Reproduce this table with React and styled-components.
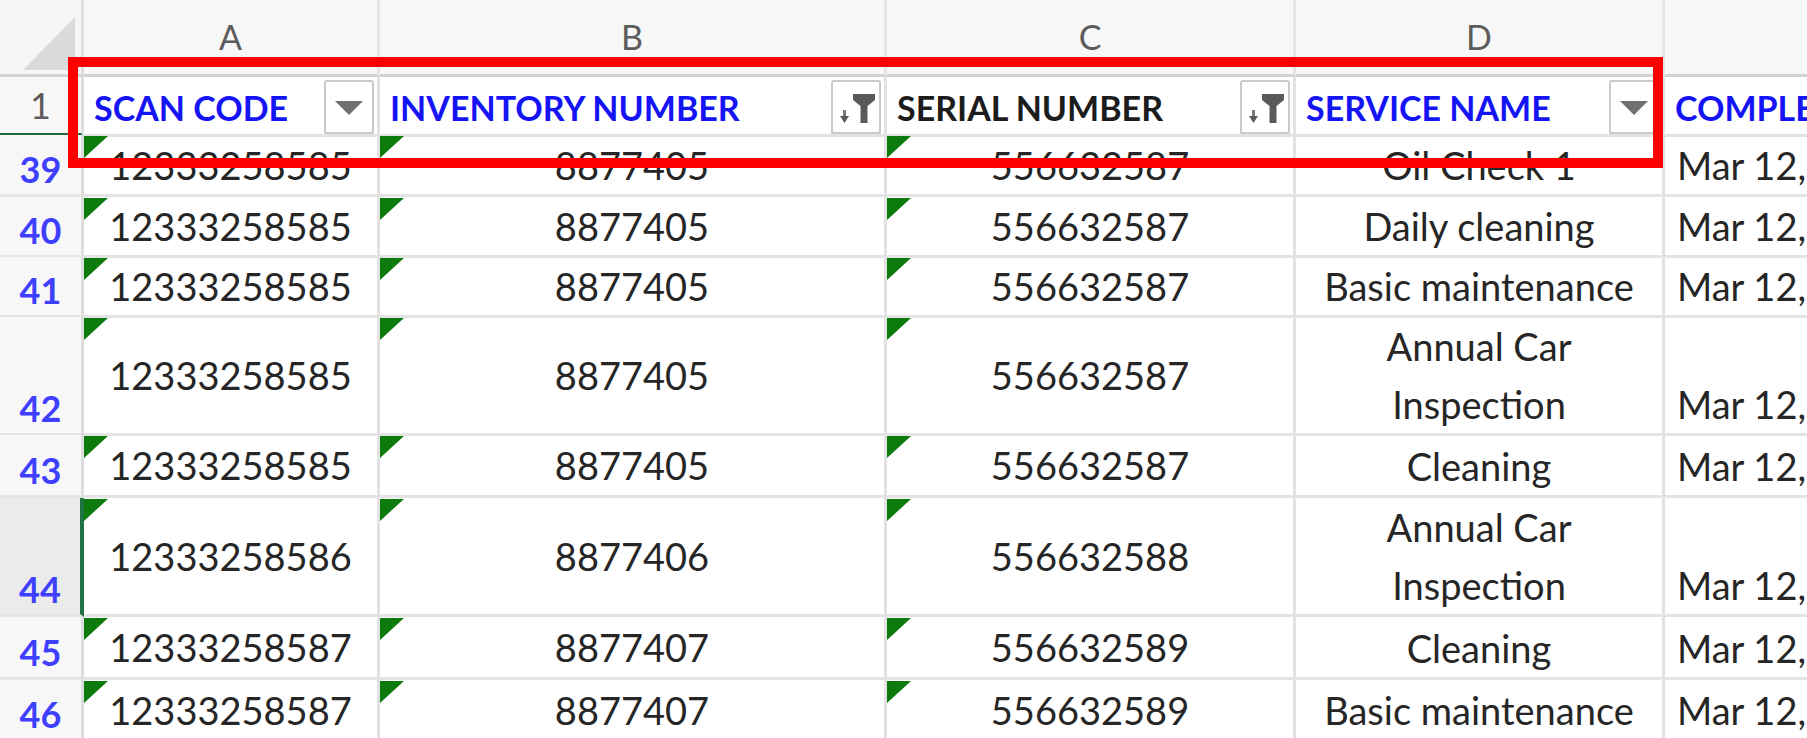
import styled, { createGlobalStyle } from 'styled-components';

const GlobalStyle = createGlobalStyle`
  body {
    margin: 0;
    background: #ffffff;
    font-family: Lato, "Open Sans", sans-serif;
  }
`;

const COLS = '84px 296px 507px 409px 369px 520px';

const rows = [
  { num: 39, h: 62, a: '12333258585', b: '8877405', c: '556632587', d: 'Oil Check 1' },
  { num: 40, h: 60, a: '12333258585', b: '8877405', c: '556632587', d: 'Daily cleaning' },
  { num: 41, h: 60, a: '12333258585', b: '8877405', c: '556632587', d: 'Basic maintenance' },
  { num: 42, h: 118, a: '12333258585', b: '8877405', c: '556632587', d: ['Annual Car', 'Inspection'] },
  { num: 43, h: 63, a: '12333258585', b: '8877405', c: '556632587', d: 'Cleaning' },
  { num: 44, h: 119, a: '12333258586', b: '8877406', c: '556632588', d: ['Annual Car', 'Inspection'], selected: true },
  { num: 45, h: 63, a: '12333258587', b: '8877407', c: '556632589', d: 'Cleaning' },
  { num: 46, h: 62, a: '12333258587', b: '8877407', c: '556632589', d: 'Basic maintenance' },
];

const headers = [
  { label: 'SCAN CODE', blue: true, filter: 'plain' },
  { label: 'INVENTORY NUMBER', blue: true, filter: 'sorted' },
  { label: 'SERIAL NUMBER', blue: false, filter: 'sorted' },
  { label: 'SERVICE NAME', blue: true, filter: 'plain' },
  { label: 'COMPLETION DATE', blue: true, filter: null },
];

function FilterIcon({ kind }) {
  if (kind === 'sorted') {
    return (
      <svg width="44" height="50" viewBox="0 0 44 50">
        <rect x="9" y="28" width="3" height="8" fill="#7a7a7a" />
        <polygon points="6,34 15,34 10.5,41" fill="#5a5a5a" />
        <polygon points="19,12 41,12 41,18 33.5,24 33.5,41 26.5,41 26.5,24 19,18" fill="#5a5a5a" />
      </svg>
    );
  }
  return (
    <svg width="44" height="50" viewBox="0 0 44 50">
      <polygon points="8,19 36,19 22,33" fill="#707070" />
    </svg>
  );
}

export default function App() {
  return (
    <>
      <GlobalStyle />
      <Viewport>
        <SheetRow $h={77}>
          <Corner />
          {['A', 'B', 'C', 'D', ''].map((l, i) => (
            <ColLetter key={i}>{l}</ColLetter>
          ))}
        </SheetRow>

        <SheetRow $h={58}>
          <RowNum $frozen>1</RowNum>
          {headers.map((h) => (
            <HeadCell key={h.label}>
              <HeadText $blue={h.blue}>{h.label}</HeadText>
              {h.filter && (
                <FilterButton>
                  <FilterIcon kind={h.filter} />
                </FilterButton>
              )}
            </HeadCell>
          ))}
        </SheetRow>

        {rows.map((r) => (
          <SheetRow key={r.num} $h={r.h}>
            <RowNum $blue $selected={r.selected}>{r.num}</RowNum>
            <DataCell $flag>{r.a}</DataCell>
            <DataCell $flag>{r.b}</DataCell>
            <DataCell $flag>{r.c}</DataCell>
            <DataCell $bottom>
              {Array.isArray(r.d) ? (
                <Lines>
                  {r.d.map((line) => (
                    <span key={line}>{line}</span>
                  ))}
                </Lines>
              ) : (
                r.d
              )}
            </DataCell>
            <DateCell>Mar 12, 2019</DateCell>
          </SheetRow>
        ))}

        <Highlight />
      </Viewport>
    </>
  );
}

// 전체 화면
const Viewport = styled.div`
  position: relative;
  width: 1807px;
  height: 738px;
  overflow: hidden;
  background: #ffffff;
`;

// 한 줄 (열 너비는 공통)
const SheetRow = styled.div`
  display: grid;
  grid-template-columns: ${COLS};
  height: ${(p) => p.$h}px;
`;

// 왼쪽 위 모서리
const Corner = styled.div`
  position: relative;
  background: #f6f6f6;
  border-right: 3px solid #dedede;
  border-bottom: 3px solid #d2d2d2;

  &::after {
    content: '';
    position: absolute;
    left: 23px;
    top: 17px;
    width: 52px;
    height: 53px;
    background: #dadada;
    clip-path: polygon(100% 0, 100% 100%, 0 100%);
  }
`;

// A, B, C, D 열 머리
const ColLetter = styled.div`
  display: flex;
  align-items: center;
  justify-content: center;
  background: #f7f7f7;
  border-right: 3px solid #e6e6e6;
  border-bottom: 3px solid #d2d2d2;
  color: #5c5c5c;
  font-size: 34px;
  line-height: 1;
`;

// 행 번호
const RowNum = styled.div`
  display: flex;
  align-items: flex-end;
  justify-content: center;
  background: ${(p) => (p.$selected ? '#ebebeb' : '#f7f7f7')};
  border-right: ${(p) => (p.$selected ? '4px solid #217346' : '3px solid #dedede')};
  border-bottom: ${(p) => (p.$frozen ? '4px solid #1f6b3c' : '3px solid #e4e4e4')};
  color: ${(p) => (p.$blue ? '#3f3fff' : '#5c5c5c')};
  font-size: 36px;
  font-weight: ${(p) => (p.$blue ? 700 : 400)};
  line-height: ${(p) => (p.$frozen ? '56px' : '50px')};
`;

// 표 머리 칸
const HeadCell = styled.div`
  display: flex;
  align-items: center;
  justify-content: space-between;
  padding: 0 3px 0 10px;
  border-right: 3px solid #e2e2e2;
  border-bottom: 3px solid #e2e2e2;
  background: #ffffff;
  overflow: hidden;
`;

const HeadText = styled.span`
  color: ${(p) => (p.$blue ? '#1414f5' : '#1c1c1c')};
  font-size: 34px;
  font-weight: 700;
  white-space: nowrap;
  padding-top: 4px;
`;

// 필터 단추
const FilterButton = styled.div`
  display: flex;
  align-items: center;
  justify-content: center;
  flex: none;
  width: 50px;
  height: 54px;
  margin-top: 3px;
  box-sizing: border-box;
  border: 2px solid #cacaca;
  border-radius: 3px;
  background: #ffffff;
  box-shadow: 0 3px 0 #dcdcdc;
`;

// 데이터 칸
const DataCell = styled.div`
  position: relative;
  display: flex;
  align-items: ${(p) => (p.$bottom ? 'flex-end' : 'center')};
  justify-content: center;
  border-right: 3px solid #e2e2e2;
  border-bottom: 3px solid #e4e4e4;
  color: #262626;
  font-size: 38px;
  line-height: 58px;
  white-space: nowrap;

  &::before {
    content: '';
    display: ${(p) => (p.$flag ? 'block' : 'none')};
    position: absolute;
    left: 0;
    top: 1px;
    width: 24px;
    height: 22px;
    background: #0c7a0c;
    clip-path: polygon(0 0, 100% 0, 0 100%);
  }
`;

const Lines = styled.div`
  display: flex;
  flex-direction: column;
  align-items: center;
`;

// 날짜 칸 (잘려 보임)
const DateCell = styled.div`
  display: flex;
  align-items: flex-end;
  padding-left: 12px;
  border-bottom: 3px solid #e4e4e4;
  color: #262626;
  font-size: 38px;
  line-height: 58px;
  white-space: nowrap;
`;

// 빨간 강조 상자
const Highlight = styled.div`
  position: absolute;
  left: 68px;
  top: 57px;
  width: 1595px;
  height: 111px;
  box-sizing: border-box;
  border: 10px solid #ff0000;
  pointer-events: none;
`;
